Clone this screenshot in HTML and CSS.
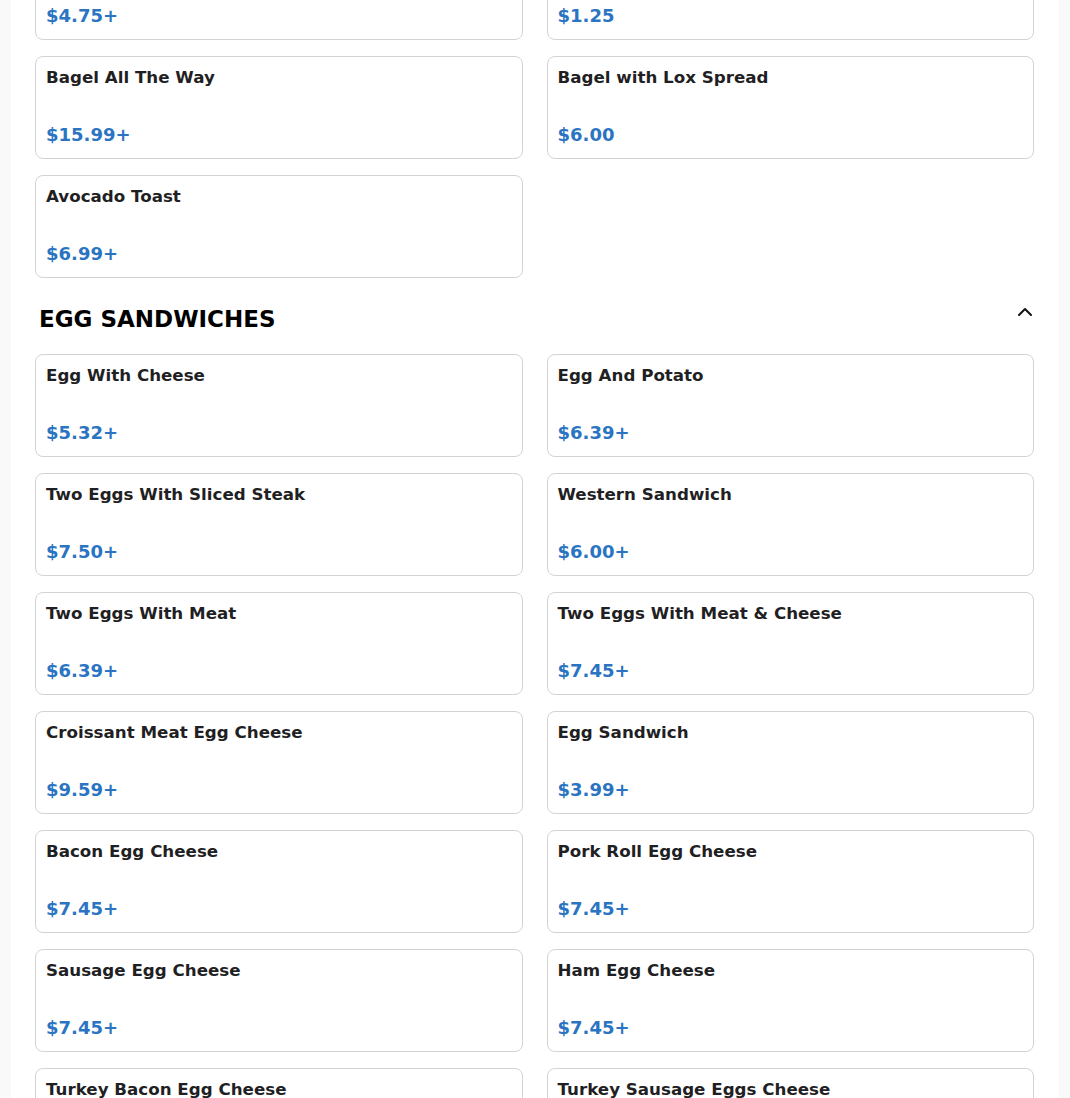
FILE: index.html
```html
<!DOCTYPE html>
<html lang="en">
<head>
<meta charset="utf-8">
<title>Menu</title>
<link rel="stylesheet" href="styles.css">
</head>
<body>
<main class="panel">
  <div class="menu">
    <div class="grid">
      <div class="card"><div class="title">Bagel with Cream Cheese</div><div class="price">$4.75+</div></div>
      <div class="card"><div class="title">Plain Bagel</div><div class="price">$1.25</div></div>
      <div class="card"><div class="title">Bagel All The Way</div><div class="price">$15.99+</div></div>
      <div class="card"><div class="title">Bagel with Lox Spread</div><div class="price">$6.00</div></div>
      <div class="card"><div class="title">Avocado Toast</div><div class="price">$6.99+</div></div>
    </div>

    <section class="section">
      <div class="section-head">
        <h2 class="section-title">EGG SANDWICHES</h2>
        <svg class="chevron" width="16" height="16" viewBox="0 0 16 16" aria-hidden="true"><path d="M2 11 L8 5 L14 11" fill="none" stroke="#111" stroke-width="2" stroke-linecap="round" stroke-linejoin="round"/></svg>
      </div>
      <div class="grid">
        <div class="card"><div class="title">Egg With Cheese</div><div class="price">$5.32+</div></div>
        <div class="card"><div class="title">Egg And Potato</div><div class="price">$6.39+</div></div>
        <div class="card"><div class="title">Two Eggs With Sliced Steak</div><div class="price">$7.50+</div></div>
        <div class="card"><div class="title">Western Sandwich</div><div class="price">$6.00+</div></div>
        <div class="card"><div class="title">Two Eggs With Meat</div><div class="price">$6.39+</div></div>
        <div class="card"><div class="title">Two Eggs With Meat &amp; Cheese</div><div class="price">$7.45+</div></div>
        <div class="card"><div class="title">Croissant Meat Egg Cheese</div><div class="price">$9.59+</div></div>
        <div class="card"><div class="title">Egg Sandwich</div><div class="price">$3.99+</div></div>
        <div class="card"><div class="title">Bacon Egg Cheese</div><div class="price">$7.45+</div></div>
        <div class="card"><div class="title">Pork Roll Egg Cheese</div><div class="price">$7.45+</div></div>
        <div class="card"><div class="title">Sausage Egg Cheese</div><div class="price">$7.45+</div></div>
        <div class="card"><div class="title">Ham Egg Cheese</div><div class="price">$7.45+</div></div>
        <div class="card"><div class="title">Turkey Bacon Egg Cheese</div><div class="price">$7.45+</div></div>
        <div class="card"><div class="title">Turkey Sausage Eggs Cheese</div><div class="price">$7.45+</div></div>
      </div>
    </section>
  </div>
</main>
</body>
</html>
```
FILE: styles.css
```css
html, body {
  margin: 0;
  padding: 0;
  background: #f9f9f9;
  font-family: "DejaVu Sans", "Liberation Sans", sans-serif;
  color: #1c1c1c;
  overflow: hidden;
}

.panel {
  margin: 0 11px;
  background: #ffffff;
  padding: 0 25px 40px 24px;
  min-height: 1098px;
  box-sizing: border-box;
}

.menu {
  margin-top: -63px;
}

.grid {
  display: grid;
  grid-template-columns: 1fr 1fr;
  column-gap: 24px;
  row-gap: 16px;
}

.card {
  height: 103px;
  box-sizing: border-box;
  border: 1px solid #d3d3d3;
  border-radius: 8px;
  background: #fff;
  padding: 10px 10px 13px 10px;
  display: flex;
  flex-direction: column;
  justify-content: space-between;
}

.title {
  font-size: 16.7px;
  font-weight: bold;
  line-height: normal;
  color: #1f1f24;
}

.price {
  font-size: 18px;
  font-weight: bold;
  line-height: normal;
  color: #2b74c2;
}

.section-head {
  display: flex;
  align-items: flex-start;
  justify-content: space-between;
  margin-top: 28px;
  margin-bottom: 22px;
}

.section-title {
  margin: 0 0 0 4px;
  font-size: 23px;
  font-weight: bold;
  line-height: normal;
  color: #000;
}

.chevron {
  margin-top: -2px;
  margin-right: 1px;
}
```
